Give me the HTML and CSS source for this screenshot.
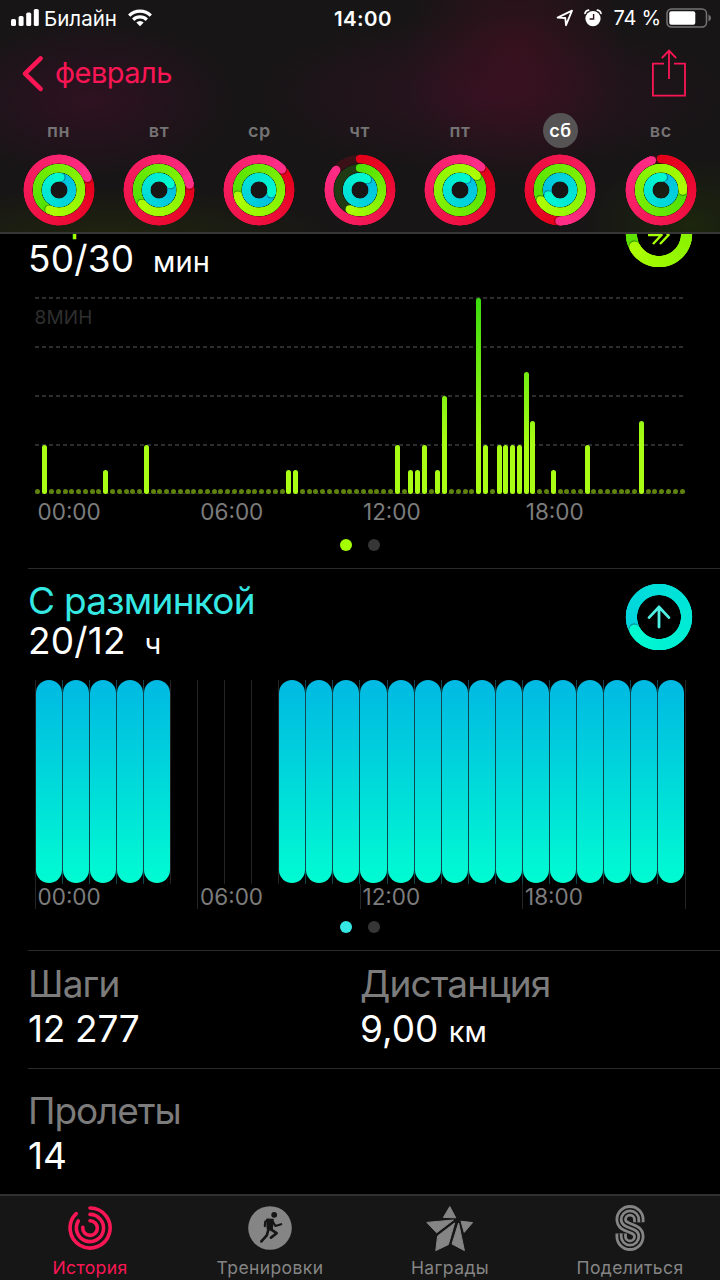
FILE: index.html
```
<!DOCTYPE html>
<html lang="ru">
<head>
  <meta charset="UTF-8">
  <title>Активность</title>
  <link rel="stylesheet" href="styles.css">
</head>
<body>

<header class="header">
  <div class="status">
    <div class="status-left">
      <svg width="28" height="18" viewBox="0 0 28 18" fill="#fff">
        <rect x="0" y="10" width="5" height="7" rx="1.6"/>
        <rect x="7.6" y="7" width="5" height="10" rx="1.6"/>
        <rect x="15.2" y="3.6" width="5" height="13.4" rx="1.6"/>
        <rect x="22.8" y="0" width="5" height="17" rx="1.6"/>
      </svg>
      <span class="carrier">Билайн</span>
      <svg class="wifi" width="24" height="18" viewBox="0 0 24 18" fill="none" stroke="#fff" stroke-width="3.3">
        <path d="M1.2 6.6 A15.3 15.3 0 0 1 22.8 6.6"/>
        <path d="M5.2 10.7 A9.7 9.7 0 0 1 18.8 10.7"/>
        <path d="M12 17.2 L8.3 13.4 A5.3 5.3 0 0 1 15.7 13.4 Z" fill="#fff" stroke="none"/>
      </svg>
    </div>
    <div class="clock">14:00</div>
    <div class="status-right">
      <svg width="18" height="18" viewBox="0 0 18 18" fill="none" stroke="#fff" stroke-width="1.8" stroke-linejoin="round">
        <path d="M1.6 8.6 L16 1.6 L10 16.2 L9.3 9 Z"/>
      </svg>
      <svg class="alarm" width="18" height="18" viewBox="0 0 18 18">
        <circle cx="9" cy="9.6" r="7.6" fill="#fff"/>
        <path d="M1 4.4 Q1.6 1.7 4.6 1.2 M17 4.4 Q16.4 1.7 13.4 1.2" fill="none" stroke="#fff" stroke-width="1.7" stroke-linecap="round"/>
        <path d="M9.6 5 V10 H5.6" fill="none" stroke="#2a1119" stroke-width="1.4"/>
      </svg>
      <span class="percent">74 %</span>
      <svg width="46" height="20" viewBox="0 0 46 20">
        <rect x="1" y="1" width="39.5" height="18" rx="4.5" fill="none" stroke="#767475" stroke-width="1.5"/>
        <rect x="3.3" y="3.3" width="26" height="13.4" rx="2" fill="#fff"/>
        <path d="M42.5 6.5 Q45 7.6 45 10 Q45 12.4 42.5 13.5 Z" fill="#767475"/>
      </svg>
    </div>
  </div>

  <nav class="nav">
    <a class="back">
      <svg width="24" height="38" viewBox="0 0 24 38" fill="none" stroke="#fa1655" stroke-width="4.6" stroke-linecap="round" stroke-linejoin="round">
        <path d="M20.6 3.4 L5 18.6 L20.6 33.8"/>
      </svg>
      <span>февраль</span>
    </a>
    <svg width="36" height="50" viewBox="0 0 36 50" fill="none" stroke="#fa1655" stroke-width="1.8">
      <path d="M13 14.7 H1.9 V46.6 H34 V14.7 H23"/>
      <path d="M18 30 V2 M10.8 9.2 L18 1.6 L25.2 9.2"/>
    </svg>
  </nav>

  <div class="week" id="week"></div>
</header>

<main class="content">
  <section class="card exercise">
    <div class="card-head">
      <div>
        <h2>Упражнения</h2>
        <p class="value">50/30 <small>мин</small></p>
      </div>
      <div class="goal" id="exerciseRing"></div>
    </div>
    <div class="plot minutes">
      <span class="scale">8МИН</span>
      <div class="bars" id="minuteBars"></div>
    </div>
    <div class="hours"><span>00:00</span><span>06:00</span><span>12:00</span><span>18:00</span></div>
    <div class="pager"><i class="on"></i><i></i></div>
  </section>

  <section class="card stand">
    <div class="card-head">
      <div>
        <h2>С разминкой</h2>
        <p class="value">20/12 <small>ч</small></p>
      </div>
      <div class="goal" id="standRing"></div>
    </div>
    <div class="plot stand-hours" id="standHours"></div>
    <div class="hours ticks"><span>00:00</span><span>06:00</span><span>12:00</span><span>18:00</span></div>
    <div class="pager"><i class="on"></i><i></i></div>
  </section>

  <section class="totals steps">
    <div>
      <h3>Шаги</h3>
      <p class="tight">12 277</p>
    </div>
    <div>
      <h3>Дистанция</h3>
      <p>9,00 <small>км</small></p>
    </div>
  </section>

  <section class="totals flights">
    <div>
      <h3>Пролеты</h3>
      <p>14</p>
    </div>
  </section>
</main>

<footer class="tabs">
  <a class="tab active">
    <svg width="48" height="48" viewBox="0 0 48 48" fill="none" stroke="#fa1655" stroke-width="3.6" stroke-linecap="round">
      <path d="M24 4 A20 20 0 1 1 10.2 9.6"/>
      <path d="M24 10.4 A13.6 13.6 0 1 1 12.3 17"/>
      <path d="M24 16.8 A7.3 7.3 0 1 1 16.8 23.4"/>
    </svg>
    <span>История</span>
  </a>
  <a class="tab">
    <svg width="48" height="48" viewBox="0 0 48 48">
      <circle cx="24" cy="24" r="21.8" fill="#858585"/>
      <circle cx="28.2" cy="10.8" r="2.9" fill="#161616"/>
      <path d="M21 15.4 L27 15.6 L26 26 L21.4 24.6 Z" fill="#161616" stroke="#161616" stroke-width="1.6" stroke-linejoin="round"/>
      <g fill="none" stroke="#161616" stroke-linecap="round" stroke-linejoin="round">
        <path d="M22 16 L19.2 17.6 L18.8 22.2 M26.8 17.6 L29.4 22 L35.2 20.2" stroke-width="2.1"/>
        <path d="M23.8 24.6 L30.6 29.2 L25 33.6 M22.6 25 L20.8 31.4 L15.4 37.4" stroke-width="2.7"/>
      </g>
    </svg>
    <span>Тренировки</span>
  </a>
  <a class="tab">
    <svg width="48" height="48" viewBox="0 0 48 48" fill="#858585" stroke="#858585" stroke-width="1" stroke-linejoin="round">
      <path d="M23.8 2.6 L17.4 13.4 L29.8 13.8 Z"/>
      <path d="M.8 18.4 L27.4 16 L10.6 28.8 Z"/>
      <path d="M35 17.2 L46.6 18.6 L38.2 28.4 Z"/>
      <path d="M28.6 19 L11.6 32 L9.8 46.6 L22.4 40.6 Z"/>
      <path d="M32.6 19 L26 40 L38.4 46.6 Z"/>
    </svg>
    <span>Награды</span>
  </a>
  <a class="tab">
    <svg width="48" height="48" viewBox="0 0 48 48" fill="none">
      <path d="M32.8 18.2 V15.6 A8.8 8.8 0 0 0 15.2 15.6 C15.2 26 32.8 22 32.8 32.4 A8.8 8.8 0 0 1 15.2 32.4 V29.6" stroke="#858585" stroke-width="11.4"/>
      <path d="M32.8 18.2 V15.6 A8.8 8.8 0 0 0 15.2 15.6 C15.2 26 32.8 22 32.8 32.4 A8.8 8.8 0 0 1 15.2 32.4 V29.6" stroke="#161616" stroke-width="5.8"/>
      <path d="M32.8 18.2 V15.6 A8.8 8.8 0 0 0 15.2 15.6 C15.2 26 32.8 22 32.8 32.4 A8.8 8.8 0 0 1 15.2 32.4 V29.6" stroke="#858585" stroke-width="2.8"/>
    </svg>
    <span>Поделиться</span>
  </a>
</footer>

<script src="app.js"></script>
</body>
</html>
```
FILE: styles.css
```
* {
  box-sizing: border-box;
}

body {
  margin: 0;
  width: 720px;
  height: 1280px;
  overflow: hidden;
  display: flex;
  flex-direction: column;
  background: #000;
  color: #fff;
  font-family: Inter, "Noto Sans", sans-serif;
}

h2, h3, p {
  margin: 0;
  font-weight: 400;
}

svg {
  display: block;
  flex: none;
}

/* header */
.header {
  flex: none;
  height: 234px;
  border-bottom: 2px solid #363636;
  background:
    radial-gradient(ellipse 150px 80px at 90px 100px, rgba(80, 12, 48, .42), transparent),
    radial-gradient(ellipse 110px 140px at 515px 50px, rgba(90, 12, 36, .4), transparent),
    radial-gradient(ellipse 240px 80px at 490px 95px, rgba(75, 15, 45, .42), transparent),
    radial-gradient(ellipse 240px 50px at 110px 236px, rgba(45, 60, 0, .38), transparent),
    radial-gradient(ellipse 110px 70px at 690px 225px, rgba(35, 60, 0, .42), transparent),
    #171516;
}

.status {
  height: 36px;
  display: grid;
  grid-template-columns: 323px auto 1fr;
  align-items: center;
  padding: 0 9px 0 11px;
}

.status-left,
.status-right {
  display: flex;
  align-items: center;
}

.status-right {
  justify-content: flex-end;
}

.carrier {
  margin-left: 5px;
  width: 84px;
  font-size: 20.5px;
  white-space: nowrap;
}

.clock {
  font-size: 20.5px;
  font-weight: 600;
  letter-spacing: .4px;
}

.alarm {
  margin: 0 11px 0 10px;
}

.percent {
  margin-right: 5px;
  font-size: 20px;
  letter-spacing: -.2px;
}

.status-right svg:last-child {
  margin-right: -1px;
}

.nav {
  height: 76px;
  display: flex;
  align-items: center;
  justify-content: space-between;
  padding: 0 33px 0 20px;
  color: #fa1655;
}

.back {
  display: flex;
  align-items: center;
  gap: 11px;
  font-size: 29px;
  line-height: 34px;
  letter-spacing: -.5px;
}

.back span {
  margin-top: -2px;
}

.week {
  display: flex;
  padding: 1px 9px 0 8.5px;
}

.day {
  flex: 1;
  display: flex;
  flex-direction: column;
  align-items: center;
  gap: 6px;
}

.day span {
  width: 35px;
  height: 35px;
  border-radius: 50%;
  text-align: center;
  line-height: 35px;
  font-size: 18px;
  font-weight: 600;
  letter-spacing: .6px;
  color: #757374;
}

.day.selected span {
  background: #555354;
  color: #fff;
}

/* scrolled content */
.content {
  flex: 1;
  min-height: 0;
  overflow: hidden;
}

.card {
  height: 382px;
  margin-left: 28px;
  border-top: 1px solid #2b2b2b;
}

.exercise {
  --accent: #a6ff00;
  margin-top: -48px;
}

.stand {
  --accent: #35e8e4;
}

.card-head {
  height: 111px;
  display: flex;
  justify-content: space-between;
  padding: 12px 27px 0 0;
}

.exercise .card-head {
  height: 110px;
}

.card h2 {
  font-size: 37px;
  line-height: 40px;
  letter-spacing: -.75px;
  color: var(--accent);
}

.value {
  font-size: 37px;
  line-height: 40px;
  letter-spacing: .2px;
}

.value small {
  margin-left: 8px;
  font-size: 29px;
}

.goal {
  margin-top: 2px;
}

.exercise .goal {
  margin-top: 1px;
}

.plot {
  width: 651px;
  margin-left: 6.5px;
}

/* dashed grid, one line per two minutes */
.minutes {
  height: 197px;
  display: grid;
  background:
    repeating-linear-gradient(90deg, transparent 0 4px, #000 4px 7px),
    repeating-linear-gradient(180deg, #2d2d2d 0 1.5px, transparent 1.5px 49px);
}

.scale,
.bars {
  grid-area: 1 / 1;
}

.scale {
  padding-top: 9px;
  font-size: 19px;
  letter-spacing: .2px;
  color: #2f2f2f;
}

.bars {
  display: flex;
}

.bars div {
  flex: 1;
  display: flex;
  align-items: flex-end;
  justify-content: center;
}

.bars i {
  width: 5px;
  height: 5px;
  border-radius: 2.5px;
  background: #5f830c;
}

.bars i.filled {
  background: linear-gradient(#3bdb10, #a9fd14 75%) bottom / 100% 196px;
}

.stand-hours {
  height: 204px;
  display: flex;
  border-right: 1px solid #242424;
}

.stand-hours div {
  flex: 1;
  border-left: 1px solid #242424;
}

.stand-hours div.stood + div.stood {
  border-left-color: #12464e;
}

.stand-hours i {
  display: block;
  height: 203px;
}

.stood i {
  border-radius: 13px;
  background: linear-gradient(#00b9e3, #00d2dc 40%, #00fcd2);
}

.hours {
  width: 651px;
  margin-left: 6.5px;
  display: grid;
  grid-template-columns: repeat(4, 1fr);
  font-size: 22.5px;
  line-height: 35px;
  color: #7c7c7c;
}

.hours span {
  padding-left: 3px;
}

.ticks {
  height: 25px;
  line-height: 24px;
  border-right: 1px solid #242424;
}

.ticks span {
  border-left: 1px solid #242424;
  padding: 1px 0 0 2px;
}

.pager {
  display: flex;
  gap: 16px;
  padding: 10px 0 0 312px;
}

.stand .pager {
  padding-top: 12px;
}

.pager i {
  width: 12px;
  height: 12px;
  border-radius: 50%;
  background: #363636;
}

.pager .on {
  background: var(--accent);
}

.totals {
  height: 118px;
  margin-left: 28px;
  display: grid;
  grid-template-columns: 332px 1fr;
  border-top: 1px solid #2b2b2b;
  padding-top: 10px;
  font-size: 37px;
  line-height: 45px;
}

.flights {
  padding-top: 19px;
}

.totals h3 {
  font-size: 37px;
  letter-spacing: -.8px;
  color: #7c7c7c;
}

.totals .tight {
  letter-spacing: -.3px;
}

.totals small {
  font-size: 29px;
}

.flights h3 {
  letter-spacing: -1.1px;
}

/* tab bar */
.tabs {
  flex: none;
  height: 86px;
  display: flex;
  background: #161616;
  border-top: 2px solid #303030;
}

.tab {
  flex: 1;
  display: flex;
  flex-direction: column;
  align-items: center;
  padding-top: 8px;
  font-size: 17.5px;
  letter-spacing: .4px;
  line-height: 32px;
  color: #858585;
}

.tab.active {
  color: #fa1655;
}
```
FILE: app.js
```
const MOVE = [[228, 0, 25], [255, 45, 135]];
const EXERCISE = [[80, 225, 5], [172, 255, 0]];
const STAND = [[0, 190, 225], [0, 250, 208]];

// end angle of every ring in degrees, over 360 when the goal is exceeded
const days = [
  { name: "пн", rings: [427, 566, 366] },
  { name: "вт", rings: [440, 591, 423] },
  { name: "ср", rings: [408, 615, 465] },
  { name: "чт", rings: [310, 208, 393] },
  { name: "пт", rings: [403, 770, 390] },
  { name: "сб", rings: [541, 602, 605], selected: true },
  { name: "вс", rings: [343, 452, 368] }
];

const mix = (c, t) => `rgb(${c[0].map((v, i) => Math.round(v + (c[1][i] - v) * t))})`;

function point(c, r, deg) {
  const a = (deg - 90) * Math.PI / 180;
  return [(c + r * Math.cos(a)).toFixed(2), (c + r * Math.sin(a)).toFixed(2)];
}

// one ring built of short arcs so the colour can follow the circle
function ring(c, r, w, end, colors) {
  const start = Math.max(0, end - 360);
  const step = 4;
  const arc = (a, b, color) => `<path d="M${point(c, r, a)} A${r} ${r} 0 0 1 ${point(c, r, b)}" fill="none" stroke="${color}" stroke-width="${w}"/>`;
  let out = `<circle cx="${c}" cy="${c}" r="${r}" fill="none" stroke="${mix(colors, 0)}" stroke-opacity=".18" stroke-width="${w}"/>`;
  if (start === 0) {
    const [sx, sy] = point(c, r, 0);
    out += `<circle cx="${sx}" cy="${sy}" r="${w / 2}" fill="${mix(colors, 0)}"/>`;
  }
  for (let a = start; a < end; a += step) {
    out += arc(a, Math.min(a + step * 3, end), mix(colors, (a - start) / (end - start)));
  }
  if (end > 360) {
    const [shx, shy] = point(c, r, end + 70 / r);
    out += `<circle cx="${shx}" cy="${shy}" r="${w / 2}" fill="#000" fill-opacity=".3"/>`;
    out += arc(end - 20, end, mix(colors, 1));
  }
  const [ex, ey] = point(c, r, end);
  return out + `<circle cx="${ex}" cy="${ey}" r="${w / 2}" fill="${mix(colors, 1)}"/>`;
}

const svg = (size, inner) => `<svg width="${size}" height="${size}" viewBox="0 0 ${size} ${size}">${inner}</svg>`;

document.getElementById("week").innerHTML = days.map(d => `
  <div class="day${d.selected ? " selected" : ""}">
    <span>${d.name}</span>
    ${svg(72, ring(36, 31, 8.4, d.rings[0], MOVE) + ring(36, 21.9, 8.2, d.rings[1], EXERCISE) + ring(36, 12.8, 8.2, d.rings[2], STAND))}
  </div>`).join("");

document.getElementById("exerciseRing").innerHTML = svg(68,
  ring(34, 27.6, 11, 602, [[90, 225, 0], [172, 255, 0]]) +
  `<path d="M23 35 H36 M28 26 L36.5 35 L28 44 M35 26 L43.5 35 L35 44" fill="none" stroke="#a6ff00" stroke-width="2.4"/>`);

document.getElementById("standRing").innerHTML = svg(68,
  ring(34, 27.6, 11, 602, [[0, 210, 222], [0, 250, 208]]) +
  `<path d="M34 44 V24 M24 34.6 L34 24 L44 34.6" fill="none" stroke="#4ff0e4" stroke-width="2.8" stroke-linecap="round" stroke-linejoin="round"/>`);

// minutes of exercise per quarter of an hour
const minutes = {
  1: 2, 10: 1, 16: 2, 37: 1, 38: 1, 53: 2, 55: 1, 56: 1, 57: 2, 59: 1, 60: 4,
  65: 8, 66: 2, 68: 2, 69: 2, 70: 2, 71: 2, 72: 5, 73: 3, 76: 1, 81: 2, 89: 3
};

let bars = "";
for (let i = 0; i < 96; i++) {
  bars += minutes[i]
    ? `<div><i class="filled" style="height:${minutes[i] * 24.5}px"></i></div>`
    : "<div><i></i></div>";
}
document.getElementById("minuteBars").innerHTML = bars;

let hours = "";
for (let h = 0; h < 24; h++) {
  hours += `<div${h < 5 || h > 8 ? ' class="stood"' : ""}><i></i></div>`;
}
document.getElementById("standHours").innerHTML = hours;
```
